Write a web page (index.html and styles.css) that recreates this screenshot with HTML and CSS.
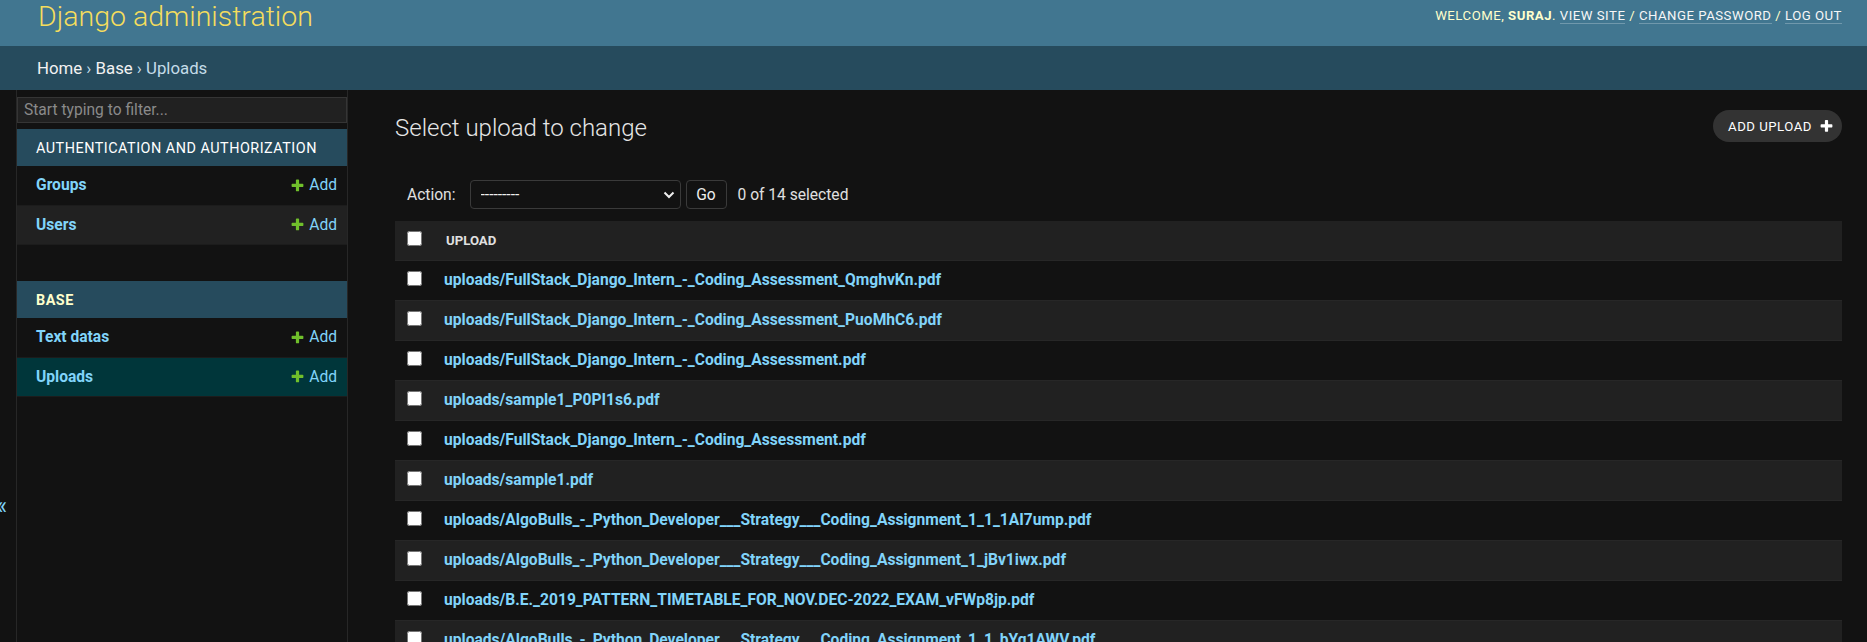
FILE: index.html
```html
<!DOCTYPE html>
<html lang="en">
<head>
<meta charset="utf-8">
<title>Select upload to change | Django site admin</title>
<link rel="stylesheet" href="styles.css">
</head>
<body>
<header class="header">
  <div class="branding">Django administration</div>
  <div class="user-tools">Welcome, <strong>suraj</strong>. <a href="#">View site</a> / <a href="#">Change password</a> / <a href="#">Log out</a></div>
</header>
<nav class="breadcrumbs"><a href="#">Home</a> › <a href="#">Base</a> › Uploads</nav>
<div class="main">
  <button class="toggle-nav" type="button" aria-label="Toggle navigation">«</button>
  <aside class="nav-sidebar">
    <input class="nav-filter" type="search" placeholder="Start typing to filter...">
    <div class="app-module">
      <div class="app-caption">Authentication and Authorization</div>
      <div class="model-row"><a class="model-link" href="#">Groups</a><a class="addlink" href="#"><svg class="plus" viewBox="0 0 1792 1792"><path fill="#70bf2b" d="M1600 796v192q0 40-28 68t-68 28h-416v416q0 40-28 68t-68 28h-192q-40 0-68-28t-28-68v-416h-416q-40 0-68-28t-28-68v-192q0-40 28-68t68-28h416v-416q0-40 28-68t68-28h192q40 0 68 28t28 68v416h416q40 0 68 28t28 68z"/></svg>Add</a></div>
      <div class="model-row"><a class="model-link" href="#">Users</a><a class="addlink" href="#"><svg class="plus" viewBox="0 0 1792 1792"><path fill="#70bf2b" d="M1600 796v192q0 40-28 68t-68 28h-416v416q0 40-28 68t-68 28h-192q-40 0-68-28t-28-68v-416h-416q-40 0-68-28t-28-68v-192q0-40 28-68t68-28h416v-416q0-40 28-68t68-28h192q40 0 68 28t28 68v416h416q40 0 68 28t28 68z"/></svg>Add</a></div>
    </div>
    <div class="app-module">
      <div class="app-caption current">Base</div>
      <div class="model-row"><a class="model-link" href="#">Text datas</a><a class="addlink" href="#"><svg class="plus" viewBox="0 0 1792 1792"><path fill="#70bf2b" d="M1600 796v192q0 40-28 68t-68 28h-416v416q0 40-28 68t-68 28h-192q-40 0-68-28t-28-68v-416h-416q-40 0-68-28t-28-68v-192q0-40 28-68t68-28h416v-416q0-40 28-68t68-28h192q40 0 68 28t28 68v416h416q40 0 68 28t28 68z"/></svg>Add</a></div>
      <div class="model-row selected"><a class="model-link" href="#">Uploads</a><a class="addlink" href="#"><svg class="plus" viewBox="0 0 1792 1792"><path fill="#70bf2b" d="M1600 796v192q0 40-28 68t-68 28h-416v416q0 40-28 68t-68 28h-192q-40 0-68-28t-28-68v-416h-416q-40 0-68-28t-28-68v-192q0-40 28-68t68-28h416v-416q0-40 28-68t68-28h192q40 0 68 28t28 68v416h416q40 0 68 28t28 68z"/></svg>Add</a></div>
    </div>
  </aside>
  <main class="content">
    <div class="content-head">
      <h1>Select upload to change</h1>
      <a class="object-tool" href="#">Add upload<svg class="plus-white" viewBox="0 0 1792 1792"><path fill="#ffffff" d="M1600 736v192q0 40-28 68t-68 28h-416v416q0 40-28 68t-68 28h-192q-40 0-68-28t-28-68v-416h-416q-40 0-68-28t-28-68v-192q0-40 28-68t68-28h416v-416q0-40 28-68t68-28h192q40 0 68 28t28 68v416h416q40 0 68 28t28 68z"/></svg></a>
    </div>
    <div class="actions">
      <label class="action-label" for="action">Action:</label>
      <span class="select-wrap">
        <select id="action" class="action-select">
          <option>---------</option>
          <option>Delete selected uploads</option>
        </select>
        <svg class="chevron" viewBox="0 0 12 8"><polyline points="1.5,1.5 6,6 10.5,1.5" fill="none" stroke="#eeeeee" stroke-width="2"/></svg>
      </span>
      <button class="go-button" type="button">Go</button>
      <span class="action-counter">0 of 14 selected</span>
    </div>
    <table class="result-list">
      <thead>
        <tr><th class="col-check"><input type="checkbox"></th><th class="col-upload">Upload</th></tr>
      </thead>
      <tbody>
        <tr><td class="col-check"><input type="checkbox"></td><td class="col-upload"><a href="#">uploads/FullStack_Django_Intern_-_Coding_Assessment_QmghvKn.pdf</a></td></tr>
        <tr><td class="col-check"><input type="checkbox"></td><td class="col-upload"><a href="#">uploads/FullStack_Django_Intern_-_Coding_Assessment_PuoMhC6.pdf</a></td></tr>
        <tr><td class="col-check"><input type="checkbox"></td><td class="col-upload"><a href="#">uploads/FullStack_Django_Intern_-_Coding_Assessment.pdf</a></td></tr>
        <tr><td class="col-check"><input type="checkbox"></td><td class="col-upload"><a href="#">uploads/sample1_P0PI1s6.pdf</a></td></tr>
        <tr><td class="col-check"><input type="checkbox"></td><td class="col-upload"><a href="#">uploads/FullStack_Django_Intern_-_Coding_Assessment.pdf</a></td></tr>
        <tr><td class="col-check"><input type="checkbox"></td><td class="col-upload"><a href="#">uploads/sample1.pdf</a></td></tr>
        <tr><td class="col-check"><input type="checkbox"></td><td class="col-upload"><a href="#">uploads/AlgoBulls_-_Python_Developer___Strategy___Coding_Assignment_1_1_1AI7ump.pdf</a></td></tr>
        <tr><td class="col-check"><input type="checkbox"></td><td class="col-upload"><a href="#">uploads/AlgoBulls_-_Python_Developer___Strategy___Coding_Assignment_1_jBv1iwx.pdf</a></td></tr>
        <tr><td class="col-check"><input type="checkbox"></td><td class="col-upload"><a href="#">uploads/B.E._2019_PATTERN_TIMETABLE_FOR_NOV.DEC-2022_EXAM_vFWp8jp.pdf</a></td></tr>
        <tr><td class="col-check"><input type="checkbox"></td><td class="col-upload"><a href="#">uploads/AlgoBulls_-_Python_Developer___Strategy___Coding_Assignment_1_1_bYq1AWV.pdf</a></td></tr>
      </tbody>
    </table>
  </main>
</div>
</body>
</html>
```
FILE: styles.css
```css
* { box-sizing: border-box; }

html { scrollbar-width: none; }

body {
  margin: 0;
  background: #121212;
  color: #eeeeee;
  font-family: Roboto, "Noto Sans", "Liberation Sans", sans-serif;
  font-size: 15.6px;
}

a { color: #81d4fa; text-decoration: none; }

/* Header */
.header {
  display: flex;
  justify-content: space-between;
  align-items: flex-start;
  height: 46px;
  padding: 0 25px 0 38px;
  background: #417690;
}
.branding {
  margin-top: 0;
  font-size: 28.5px;
  line-height: 34px;
  font-weight: 300;
  color: #f5dd5d;
}
.user-tools {
  margin-top: 6px;
  font-size: 13.2px;
  line-height: 20px;
  letter-spacing: 0.5px;
  text-transform: uppercase;
  font-weight: 400;
  color: #ffffcc;
}
.user-tools strong { font-weight: 700; }
.user-tools a {
  color: #f7f7f7;
  border-bottom: 1px solid rgba(255, 255, 255, 0.25);
}

/* Breadcrumbs */
.breadcrumbs {
  height: 44px;
  line-height: 44px;
  padding: 0 37px;
  background: #264b5d;
  color: #c4dce8;
  font-size: 16.8px;
}
.breadcrumbs a { color: #f2f2f2; }

/* Main layout */
.main {
  display: flex;
  align-items: stretch;
  min-height: calc(100vh - 90px);
}

.toggle-nav {
  flex: 0 0 17px;
  width: 17px;
  display: flex;
  justify-content: flex-end;
  align-items: flex-start;
  overflow: hidden;
  margin: 0;
  padding: 403px 9px 0 0;
  border: 0;
  border-right: 1px solid #272727;
  background: #121212;
  color: #81d4fa;
  font-family: inherit;
  font-size: 23px;
  line-height: 27px;
}

.nav-sidebar {
  flex: 0 0 331px;
  border-right: 1px solid #272727;
}
.nav-filter {
  display: block;
  width: 100%;
  height: 26px;
  margin: 7px 0 6px;
  padding: 2px 6px;
  border: 1px solid #353535;
  background: #212121;
  color: #eeeeee;
  font-family: inherit;
  font-size: 15.6px;
  outline: none;
}
.nav-filter::placeholder { color: #8a8a8a; }

.app-module { margin-bottom: 36px; }
.app-caption {
  display: flex;
  align-items: center;
  height: 37px;
  padding: 1px 19px 0;
  background: #264b5d;
  color: #ffffff;
  font-size: 14.4px;
  letter-spacing: 0.5px;
  text-transform: uppercase;
}
.app-caption.current { color: #ffffcc; font-weight: 700; }

.model-row {
  display: flex;
  justify-content: space-between;
  align-items: center;
  height: 39.5px;
  padding: 0 10px 0 19px;
  border-bottom: 1px solid #1c1c1c;
  background: #121212;
}
.model-row:nth-child(odd) { background: #212121; }
.model-row.selected { background: #00363a; }
.model-link { font-weight: 700; font-size: 15.6px; }
.addlink {
  display: flex;
  align-items: center;
  gap: 4px;
  font-size: 15.6px;
}
.plus { width: 15px; height: 15px; }

/* Content */
.content {
  flex: 1;
  min-width: 0;
  padding: 20px 25px 0 47px;
}
.content-head {
  display: flex;
  justify-content: space-between;
  align-items: flex-start;
  margin-bottom: 24px;
}
h1 {
  margin: 3px 0 0;
  font-size: 24px;
  line-height: 31px;
  font-weight: 300;
  color: #e6e6e6;
}
.object-tool {
  display: flex;
  align-items: center;
  gap: 7px;
  height: 32px;
  padding: 0 8px 0 15px;
  border-radius: 16px;
  background: #333333;
  color: #ffffff;
  font-size: 13.2px;
  letter-spacing: 0.5px;
  text-transform: uppercase;
}
.plus-white { width: 15px; height: 15px; }

.actions {
  display: flex;
  align-items: center;
  padding: 12px;
  color: #e0e0e0;
  font-size: 15.6px;
}
.select-wrap {
  position: relative;
  display: block;
  margin-left: 14px;
}
.action-select {
  display: block;
  width: 211px;
  height: 29px;
  padding: 0 24px 0 10px;
  border: 1px solid #3a3a3a;
  border-radius: 4px;
  background: #121212;
  color: #eeeeee;
  font-family: inherit;
  font-size: 15.6px;
  appearance: none;
  -webkit-appearance: none;
}
.chevron {
  position: absolute;
  right: 6px;
  top: 11px;
  width: 12px;
  height: 8px;
  pointer-events: none;
}
.go-button {
  height: 29px;
  width: 41px;
  margin-left: 5px;
  padding: 0;
  border: 1px solid #3a3a3a;
  border-radius: 4px;
  background: #121212;
  color: #eeeeee;
  font-family: inherit;
  font-size: 15.6px;
}
.action-counter { margin-left: 11px; }

/* Table */
.result-list {
  width: 100%;
  border-collapse: collapse;
}
.result-list th,
.result-list td {
  padding: 9px 10px;
  line-height: 21px;
  border-bottom: 1px solid #272727;
  text-align: left;
  vertical-align: top;
}
.result-list thead th {
  background: #212121;
  color: #e0e0e0;
  font-size: 13.2px;
  font-weight: 700;
  text-transform: uppercase;
}
.result-list thead th.col-upload { padding-left: 12px; }
.result-list tbody tr:nth-child(odd) td { background: #121212; }
.result-list tbody tr:nth-child(even) td { background: #212121; }
.result-list .col-check {
  width: 39px;
  padding: 10px 12px 0;
}
.result-list .col-upload a { font-weight: 700; font-size: 15.6px; }
.result-list input[type="checkbox"] {
  display: block;
  width: 15px;
  height: 15px;
  margin: 0;
}
```
